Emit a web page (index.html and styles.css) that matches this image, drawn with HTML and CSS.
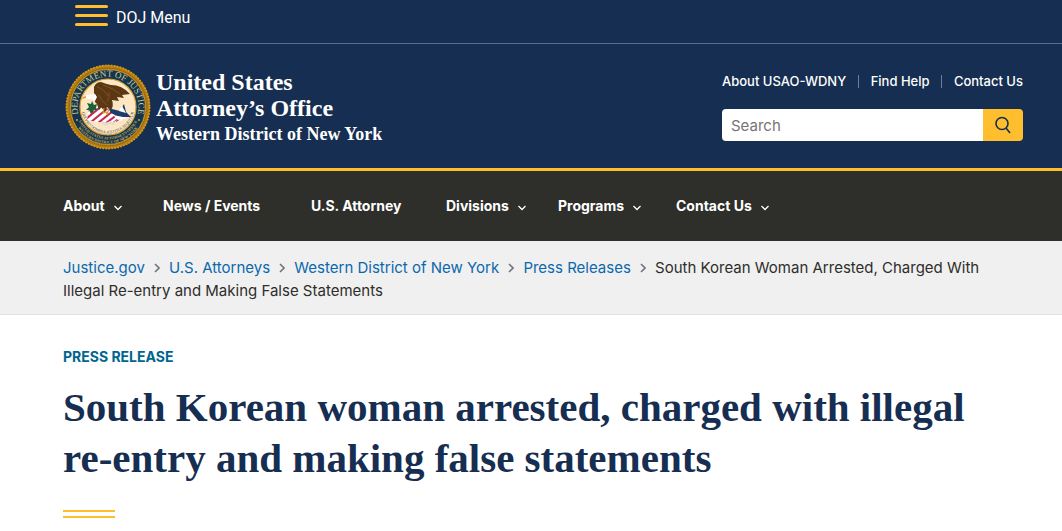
FILE: index.html
```html
<!DOCTYPE html>
<html lang="en">
<head>
  <meta charset="UTF-8" />
  <meta name="viewport" content="width=device-width, initial-scale=1" />
  <title>Western District of New York | South Korean woman arrested</title>
  <link rel="stylesheet" href="styles.css">
</head>
<body>
  <div class="topbar">
    <button class="menu-button" type="button">
      <span class="bars"><span></span><span></span><span></span></span>
      DOJ Menu
    </button>
  </div>

  <header class="header">
    <a class="brand" href="#">
      <svg class="seal" viewBox="0 0 86 86" aria-hidden="true">
        <defs>
          <path id="arc-top" d="M19.100 62A30.500 30.500 0 1 1 66.900 62" />
          <path id="arc-low" d="M10.500 43A32.500 32.500 0 0 0 75.500 43" />
          <path id="arc-low2" d="M6.500 43A36.500 36.500 0 0 0 79.500 43" />
          <path id="arc-motto" d="M16.500 43A26.500 26.500 0 0 0 69.500 43" />
          <clipPath id="shield"><path d="M24 44Q34 39 43 45L58 56Q44 61 22 56Z" /></clipPath>
        </defs>
        <circle cx="43" cy="43" r="42" fill="#b47d12" />
        <circle cx="43" cy="43" r="41.500" fill="none" stroke="#d99a1c" stroke-width="1.800" stroke-dasharray="1.800 1.200" />
        <circle cx="43" cy="43" r="38.800" fill="none" stroke="#80560d" stroke-width="1" stroke-dasharray="1 1" />
        <circle cx="43" cy="43" r="37.500" fill="#123650" stroke="#d7a02c" stroke-width=".8" />
        <circle cx="43" cy="43" r="28" fill="#fde6c4" stroke="#d9a22f" stroke-width="1.200" />
        <text class="seal-name"><textPath href="#arc-top" startOffset="50%" text-anchor="middle">DEPARTMENT OF JUSTICE</textPath></text>
        <text class="seal-small"><textPath href="#arc-low" startOffset="50%" text-anchor="middle">UNITED STATES ATTORNEYS OFFICE</textPath></text>
        <text class="seal-small"><textPath href="#arc-low2" startOffset="50%" text-anchor="middle">WESTERN DISTRICT OF NEW YORK</textPath></text>
        <text class="seal-motto"><textPath href="#arc-motto" startOffset="50%" text-anchor="middle">QUI PRO DOMINA JUSTITIA SEQUITUR</textPath></text>
        <circle cx="12" cy="56" r="1" fill="#d9a22f" />
        <circle cx="74" cy="56" r="1" fill="#d9a22f" />
        <!-- shield, olive branch and arrows -->
        <g clip-path="url(#shield)">
          <path d="M20 38h40v24H20z" fill="#fff" />
          <path d="M20 49l12-10M21 55l17-14M26 58l17-14M33 59l15-12M40 60l13-10M47 60l12-9" stroke="#c8284f" stroke-width="2.200" />
        </g>
        <path d="M43 44l12 3 4-7 2 8 5 5-12 0-8-4z" fill="#1d3b6c" />
        <path d="M48 51l15 3-10 2zM57 42l4 7-7-2z" fill="#fff" />
        <path d="M22 39l4 1 1-3 2 4 3-1-1 4 2 2-4 0-2 3-2-3-4 0 3-3zM24 46l5 1-3 3z" fill="#1c6138" />
        <!-- eagle -->
        <path d="M29 23Q31 18 36 18Q41 20 46 21Q57 21 65 30L57 31L59 34L52 33L54 37L47 36Q49 42 46 46L42 43L40 48L36 43L34 46L32 40Q28 37 31 32L29 29Z" fill="#5b3714" />
        <path d="M32 23Q39 25 43 32M38 21Q48 24 55 30M34 31Q36 37 42 41M44 28Q45 34 42 38" fill="none" stroke="#81521f" stroke-width="1" />
        <path d="M30 30l-8 1-4 3 5 1 3 0 4 2 2-4z" fill="#fff" />
        <path d="M18 33l3-1v2l-4 1z" fill="#dfa42d" />
        <path d="M39 44l-1 5 3-1 1 2 2-5" fill="none" stroke="#d59a22" stroke-width="1.200" />
        <path d="M37 57l4 2 4-2 3 1 4-2-3 5-4-1-4 2-4-2z" fill="#e4dccf" />
      </svg>
      <span class="brand-text">
        <span class="brand-name">United States</span>
        <span class="brand-name">Attorney’s Office</span>
        <span class="brand-district">Western District of New York</span>
      </span>
    </a>

    <div class="header-tools">
      <ul class="quick-links">
        <li><a href="#">About USAO-WDNY</a></li>
        <li><a href="#">Find Help</a></li>
        <li><a href="#">Contact Us</a></li>
      </ul>
      <form class="search">
        <input type="search" placeholder="Search" aria-label="Search" />
        <button type="button" aria-label="Search">
          <svg viewBox="0 0 18 18"><circle cx="8" cy="7.500" r="6" /><path d="M12 12l4 5" /></svg>
        </button>
      </form>
    </div>
  </header>

  <nav class="main-nav" aria-label="Main">
    <ul>
      <li><a href="#">About <svg viewBox="0 0 8 6"><path d="M.5 1L4 4.500 7.500 1" /></svg></a></li>
      <li><a href="#">News / Events</a></li>
      <li><a href="#">U.S. Attorney</a></li>
      <li><a href="#">Divisions <svg viewBox="0 0 8 6"><path d="M.5 1L4 4.500 7.500 1" /></svg></a></li>
      <li><a href="#">Programs <svg viewBox="0 0 8 6"><path d="M.5 1L4 4.500 7.500 1" /></svg></a></li>
      <li><a href="#">Contact Us <svg viewBox="0 0 8 6"><path d="M.5 1L4 4.500 7.500 1" /></svg></a></li>
    </ul>
  </nav>

  <nav class="breadcrumb" aria-label="Breadcrumb">
    <ol>
      <li><a href="#">Justice.gov</a><svg viewBox="0 0 6 10"><path d="M1 1l4 4-4 4" /></svg></li>
      <li><a href="#">U.S. Attorneys</a><svg viewBox="0 0 6 10"><path d="M1 1l4 4-4 4" /></svg></li>
      <li><a href="#">Western District of New York</a><svg viewBox="0 0 6 10"><path d="M1 1l4 4-4 4" /></svg></li>
      <li><a href="#">Press Releases</a><svg viewBox="0 0 6 10"><path d="M1 1l4 4-4 4" /></svg></li>
      <li>South Korean Woman Arrested, Charged With Illegal Re-entry and Making False Statements</li>
    </ol>
  </nav>

  <main class="content">
    <p class="kicker">PRESS RELEASE</p>
    <h1>South Korean woman arrested, charged with illegal re-entry and making false statements</h1>
    <div class="rule"></div>
  </main>
</body>
</html>
```
FILE: styles.css
```css
* { box-sizing: border-box; }
body { margin: 0; background: #fff; color: #2e2e2a; font-family: Inter, "Liberation Sans", sans-serif; font-size: 15px; }
ul, ol { list-style: none; margin: 0; padding: 0; }
a { text-decoration: none; }

.topbar { height: 44px; padding-left: 75px; background: #162e51; border-bottom: 1px solid #5c6d89; }
.menu-button { display: flex; align-items: center; gap: 8px; padding: 5px 0 0; border: none; background: none; color: #fff; font: 16px/24px Roboto, sans-serif; cursor: pointer; }
.bars { display: flex; flex-direction: column; gap: 6px; width: 33px; padding-bottom: 4px; }
.bars span { height: 3px; border-radius: 2px; background: #ffbe2e; }

.header { display: flex; justify-content: space-between; padding: 20px 39px 18px 65px; background: #162e51; border-bottom: 3px solid #ffbe2e; }
.brand { display: flex; gap: 5px; color: #fff; }
.seal { width: 86px; height: 86px; }
.seal-name { fill: #d8c88c; font: 9px "Liberation Serif", serif; }
.seal-small { fill: #c5a95b; font: bold 4px "Liberation Serif", serif; }
.seal-motto { fill: #33404d; font: 4px "Liberation Serif", serif; }
.brand-text { display: flex; flex-direction: column; padding-top: 5px; font-family: "Liberation Serif", serif; font-weight: bold; }
.brand-name { font-size: 24px; line-height: 26px; }
.brand-district { font-size: 18px; line-height: 26px; }

.header-tools { width: 301px; padding-top: 7px; }
.quick-links { display: flex; justify-content: space-between; font-size: 13px; font-weight: 500; line-height: 20px; white-space: nowrap; }
.quick-links li { display: flex; align-items: center; }
.quick-links li + li::before { content: ""; width: 1px; height: 13px; margin-right: 12px; background: #71809a; }
.quick-links a { color: #fff; }
.search { display: flex; height: 32px; margin-top: 18px; }
.search input { flex: 1; min-width: 0; padding: 0 9px; border: none; border-radius: 4px 0 0 4px; background: #fff; font: 15px Inter, sans-serif; }
.search input::placeholder { color: #757575; }
.search button { display: flex; align-items: center; justify-content: center; width: 40px; padding: 0; border: none; border-radius: 0 4px 4px 0; background: #ffbe2e; cursor: pointer; }
.search svg { width: 18px; height: 18px; fill: none; stroke: #162e51; stroke-width: 1.6; }

.main-nav { padding: 0 63px; background: #2e2e2a; }
.main-nav ul { display: grid; grid-template-columns: 100px 148px 135px 112px 118px auto; }
.main-nav a { display: flex; align-items: center; gap: 9px; height: 70px; padding-bottom: 2px; color: #fff; font-size: 14px; font-weight: 700; white-space: nowrap; }
.main-nav svg { width: 8px; height: 6px; margin-top: 6px; fill: none; stroke: #fff; stroke-width: 1.3; }

.breadcrumb { padding: 15px 63px 12px; background: #f0f0f0; border-bottom: 1px solid #dfe1e2; line-height: 23px; }
.breadcrumb li { display: inline; }
.breadcrumb a { color: #0b68ad; }
.breadcrumb svg { width: 6px; height: 10px; margin: 0 5px 0 9px; fill: none; stroke: #71767a; stroke-width: 1.6; }

.content { padding: 32px 63px; }
.kicker { margin: 0; color: #00658d; font-size: 14px; font-weight: 700; line-height: 20px; }
h1 { margin: 15px 0 0; color: #162e51; font: bold 41px/51px "Liberation Serif", serif; }
.rule { width: 52px; height: 8px; margin-top: 26px; border-top: 2px solid #ffbe2e; border-bottom: 2px solid #ffbe2e; }
```
